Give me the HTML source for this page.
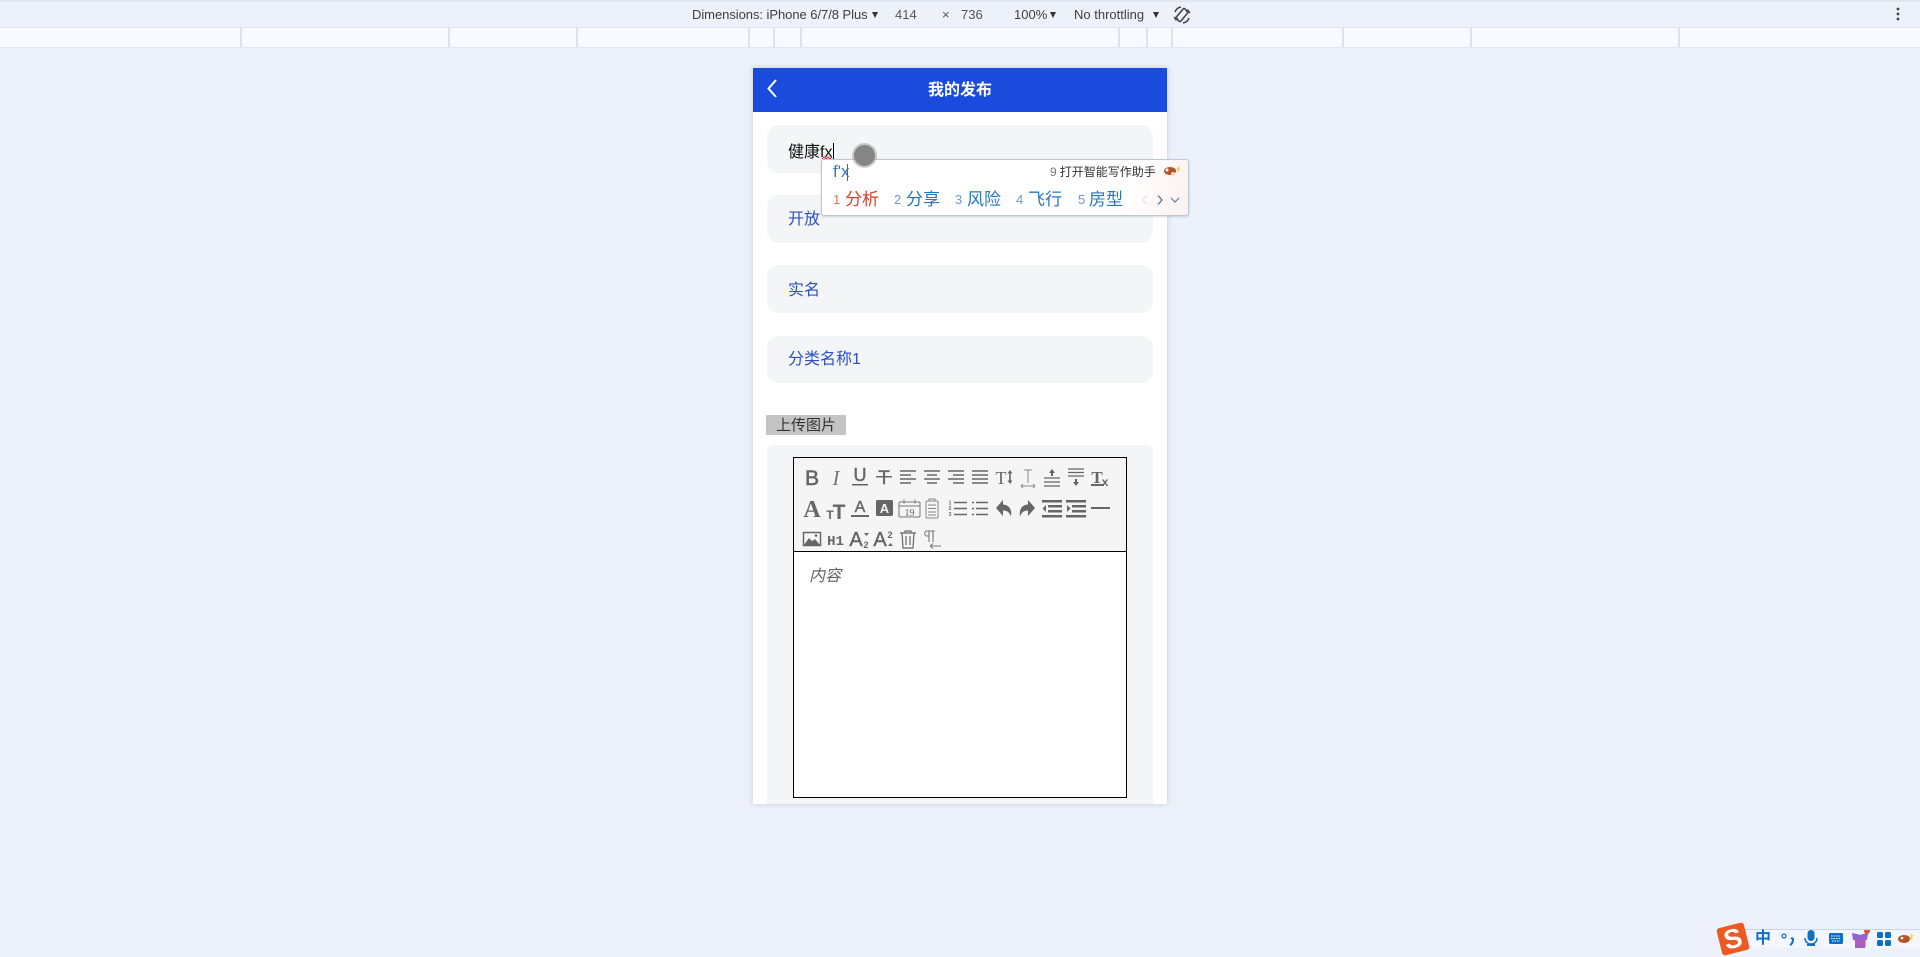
<!DOCTYPE html>
<html lang="zh">
<head>
<meta charset="utf-8">
<title>我的发布</title>
<style>
html,body{margin:0;padding:0;width:1920px;height:948px;overflow:hidden;background:#edf1fa;font-family:"Liberation Sans","Noto Sans CJK SC",sans-serif}
.a{position:absolute;white-space:nowrap}
.t{font-size:13px;color:#3a3f47;line-height:16px;top:7px}
.tri{width:0;height:0;border-left:3.500px solid transparent;border-right:3.500px solid transparent;border-top:6px solid #333;top:12px}
.rule{top:28px;width:2px;height:19px;background:#dbe2f3}
.box{left:767px;width:386px;background:#f4f5f6;border-radius:12px}
.v{left:788px;font-size:16px;line-height:24px;color:#2b50c4}
.n{font-size:13px;color:#6f97c8;line-height:20px;top:190px}
.w{font-size:17px;color:#2a76b8;line-height:22px;top:189px}
</style>
</head>
<body>
<div class="a" style="left:0;top:0;width:1920px;height:2px;background:#e3e7f2"></div>
<div class="a" style="left:0;top:27px;width:1920px;height:21px;background:#f7faff;border-top:1px solid #e2e6f0;border-bottom:1px solid #e2e6f0;box-sizing:border-box"></div>
<div class="a rule" style="left:240px"></div><div class="a rule" style="left:448px"></div><div class="a rule" style="left:576px"></div><div class="a rule" style="left:748px"></div><div class="a rule" style="left:773px"></div><div class="a rule" style="left:800px"></div><div class="a rule" style="left:1118px"></div><div class="a rule" style="left:1146px"></div><div class="a rule" style="left:1171px"></div><div class="a rule" style="left:1342px"></div><div class="a rule" style="left:1470px"></div><div class="a rule" style="left:1678px"></div>

<div class="a t" style="left:692px;letter-spacing:-.05px">Dimensions: iPhone 6/7/8 Plus</div><div class="a tri" style="left:872px"></div>
<div class="a t" style="left:895px;color:#555">414</div><div class="a t" style="left:942px;color:#555">×</div><div class="a t" style="left:961px;color:#555">736</div>
<div class="a t" style="left:1014px">100%</div><div class="a tri" style="left:1050px"></div>
<div class="a t" style="left:1074px">No throttling</div><div class="a tri" style="left:1153px"></div>
<svg class="a" style="left:1172px;top:5px" width="20" height="20" viewBox="0 0 20 20" fill="none" stroke="#444" stroke-width="1.600"><rect x="7" y="3.500" width="6" height="13" rx="1" transform="rotate(40 10 10)"/><path d="M3 7C4 4 6 2.500 9 2M17 13c-1 3-3 4.500-6 5"/><path d="M2 12l2 3 2-2M18 8l-2-3-2 2" stroke-width="1.200"/></svg>
<svg class="a" style="left:1895px;top:7px" width="6" height="14"><circle cx="3" cy="2" r="1.400" fill="#444"/><circle cx="3" cy="7" r="1.400" fill="#444"/><circle cx="3" cy="12" r="1.400" fill="#444"/></svg>

<!-- phone -->
<div class="a" style="left:753px;top:68px;width:414px;height:736px;background:#fff;box-shadow:0 0 5px rgba(120,130,160,.35)"></div>
<div class="a" style="left:753px;top:68px;width:414px;height:44px;background:#1a4bdc"></div>
<svg class="a" style="left:765px;top:78px" width="16" height="22" fill="none" stroke="#fff" stroke-width="2"><path d="M11 2L3.500 10.500 11 19"/></svg>
<div class="a" style="left:753px;top:79px;width:414px;text-align:center;color:#fff;font-weight:700;font-size:16px;line-height:24px">我的发布</div>

<div class="a box" style="top:125px;height:48px"></div>
<div class="a box" style="top:195px;height:48px"></div>
<div class="a box" style="top:265px;height:48px"></div>
<div class="a box" style="top:336px;height:47px"></div>
<div class="a" style="left:788px;top:141px;font-size:16px;line-height:24px;color:#111">健康fx</div>
<div class="a" style="left:833px;top:143px;width:1px;height:17px;background:#000"></div>
<div class="a v" style="top:208px">开放</div>
<div class="a v" style="top:279px">实名</div>
<div class="a v" style="top:348px">分类名称1</div>

<div class="a" style="left:766px;top:415px;width:80px;height:20px;background:#c4c4c4;color:#333;font-size:15px;line-height:22px;text-align:center">上传图片</div>

<div class="a box" style="top:445px;height:359px;border-radius:6px 6px 0 0"></div>
<div class="a" style="left:793px;top:457px;width:334px;height:341px;border:1px solid #000;box-sizing:border-box;background:#fff"></div>
<div class="a" style="left:794px;top:458px;width:332px;height:93px;background:#f5f5f6;border-bottom:1px solid #000"></div>
<div class="a" style="left:809px;top:565px;font-size:16px;line-height:24px;color:#666;font-style:italic">内容</div>

<svg class="a" style="left:0;top:0;pointer-events:none" width="1920" height="948" viewBox="0 0 1920 948">
<g fill="#666" stroke="#666" font-family="'Liberation Sans',sans-serif" text-anchor="middle" stroke-width="0">
 <!-- row 1 -->
 <text x="812" y="485" font-size="21" stroke-width=".6">B</text>
 <text x="836" y="485" font-size="21" font-style="italic" font-family="'Liberation Serif',serif" fill="#777">I</text>
 <text x="860" y="481" font-size="18" stroke-width=".4">U</text><rect x="852" y="484" width="16" height="1.500"/>
 <text x="884" y="484" font-size="19" stroke-width=".4">T</text><rect x="876" y="476" width="16" height="1.500"/>
 <g fill="none" stroke-width="1.500">
  <path d="M900 471h16M900 475h11M900 479h16M900 483h11"/>
  <path d="M924 471h16M927 475h10M924 479h16M927 483h10"/>
  <path d="M948 471h16M953 475h11M948 479h16M953 483h11"/>
  <path d="M972 471h16M972 475h16M972 479h16M972 483h16"/>
 </g>
 <text x="1001" y="484" font-size="18" font-family="'Liberation Serif',serif">T</text>
 <path d="M1010 470l2.500 3.500h-1.700v7h1.700l-2.500 3.500-2.500-3.500h1.700v-7h-1.700z" stroke-width="0"/>
 <g fill="none" stroke="#8a8a8a" stroke-width="1">
  <path d="M1024 470h8M1028 470v13M1022 486h12M1021 486l2-2M1021 486l2 2M1035 486l-2-2M1035 486l-2 2"/>
 </g>
 <g fill="none" stroke-width="1.200"><path d="M1044 478h16M1044 482h16M1044 486h16"/></g><path d="M1052 469l3 4h-2v3h-2v-3h-2z"/>
 <g fill="none" stroke-width="1.300"><path d="M1068 469h16M1068 472.500h16M1068 476h16"/></g><path d="M1076 486l3-4h-2v-3h-2v3h-2z"/>
 <text x="1097" y="483" font-size="17" font-weight="700" font-family="'Liberation Serif',serif">T</text><rect x="1091" y="484" width="13" height="2"/>
 <text x="1105" y="486" font-size="12" font-weight="700">x</text>

 <!-- row 2 -->
 <text x="812" y="517" font-size="24" font-weight="700" font-family="'Liberation Serif',serif">A</text>
 <text x="830" y="519" font-size="12" font-weight="700">T</text><text x="839" y="519" font-size="21" font-weight="700">T</text>
 <text x="860" y="512" font-size="16" stroke-width=".4">A</text><rect x="851" y="515" width="18" height="2"/>
 <rect x="876" y="500" width="17" height="16" rx="1.500"/><text x="884.500" y="513" font-size="13" font-weight="700" fill="#f5f5f6">A</text>
 <g fill="none" stroke="#777" stroke-width="1"><rect x="899" y="502" width="21" height="15" rx="1"/><path d="M899 506h21M904 499.500v4M915 499.500v4"/></g>
 <text x="909.500" y="516" font-size="10" font-family="'Liberation Serif',serif">19</text>
 <g fill="none" stroke="#888" stroke-width="1"><rect x="926" y="501" width="12" height="17" rx="1"/><path d="M929 501v-2h6v2M928 505h8M928 508.500h8M928 512h8M928 515h8"/></g>
 <text x="950" y="504.500" font-size="5" font-weight="700">1</text><text x="950" y="510" font-size="5" font-weight="700">2</text><text x="950" y="516" font-size="5" font-weight="700">3</text>
 <g fill="none" stroke-width="1.500"><path d="M954 502.500h13M954 508.500h13M954 514.500h13"/><path d="M972 502.500h2M972 508.500h2M972 514.500h2M976 502.500h12M976 508.500h12M976 514.500h12"/></g>
 <path d="M996 508l7-8v4.500c7 .5 9 6 8 12-1.500-4-3.500-6-8-6v5.500z"/>
 <path d="M1036 508l-7-8v4.500c-7 .5-9 6-8 12 1.500-4 3.500-6 8-6v5.500z" transform="translate(-1 0)"/>
 <g><rect x="1042" y="500" width="20" height="2.500"/><rect x="1048" y="505" width="14" height="2.500"/><rect x="1048" y="510" width="14" height="2.500"/><rect x="1042" y="515" width="20" height="2.500"/><path d="M1046 505v7l-3.500-3.500z"/></g>
 <g><rect x="1066" y="500" width="20" height="2.500"/><rect x="1072" y="505" width="14" height="2.500"/><rect x="1072" y="510" width="14" height="2.500"/><rect x="1066" y="515" width="20" height="2.500"/><path d="M1067 505v7l3.500-3.500z"/></g>
 <rect x="1091" y="507" width="19" height="2"/>

 <!-- row 3 -->
 <g><rect x="803.500" y="532.500" width="17" height="13" fill="#f5f5f6" stroke="#666" stroke-width="1.500"/><path d="M804 545l5-7 3 3 3-2 5 6z"/><circle cx="816" cy="535.500" r="1.300"/></g>
 <text x="835.500" y="545" font-size="14" font-family="'Liberation Mono',monospace" font-weight="700">H1</text>
 <text x="856" y="546" font-size="20" stroke-width=".4">A</text><text x="866" y="548" font-size="9" font-weight="700">2</text><path d="M864 533h5l-2.500 3z"/>
 <text x="880" y="546" font-size="20" stroke-width=".4">A</text><text x="890" y="538" font-size="9" font-weight="700">2</text><path d="M888 546h5l-2.500-3z"/>
 <g fill="none" stroke="#666" stroke-width="1.200"><path d="M900 533h16M905 533v-2h6v2M902 533l1 15h10l1-15M906 536v9M910 536v9"/></g>
 <g fill="none" stroke="#777" stroke-width="1.100"><path d="M930 531h8M932 531v11M936 531v11M930 531c-3 0-3 5 0 5h2M944 546h-11M933 546l3-2.500M933 546l3 2.500" transform="translate(-3 0)"/></g>
</g>
</svg>

<!-- IME -->
<svg class="a" style="left:822px;top:156px" width="12" height="4"><path d="M0 3l2-2 2 2 2-2 2 2 2-2" fill="none" stroke="#e03030" stroke-width="1"/></svg>
<div class="a" style="left:821px;top:159px;width:368px;height:57px;box-sizing:border-box;border:1px solid #bcc6dd;border-radius:3px;background:linear-gradient(100deg,#fff 82%,#fdf1f2 100%);box-shadow:0 1px 2px rgba(90,100,130,.25)"></div>
<div class="a" style="left:833px;top:161px;font-size:17px;line-height:22px;color:#3a78b8">f'x</div>
<div class="a" style="left:847px;top:164px;width:1px;height:17px;background:#c0392b"></div>
<div class="a" style="left:1050px;top:164px;font-size:12px;line-height:17px;color:#333"><span style="color:#777;margin-right:3px">9</span>打开智能写作助手</div>
<svg class="a" style="left:1161px;top:162px" width="22" height="20"><ellipse cx="9" cy="9" rx="6" ry="4" fill="#b8532a"/><circle cx="6" cy="8" r="1.500" fill="#fff"/><circle cx="12" cy="12" r="2" fill="#f0d8c8"/><path d="M17 4l2 2-1 4-2-2z" fill="#f3d34a"/></svg>
<div class="a n" style="left:833px;color:#e8735a">1</div><div class="a w" style="left:845px;color:#d9402a">分析</div>
<div class="a n" style="left:894px">2</div><div class="a w" style="left:906px">分享</div>
<div class="a n" style="left:955px">3</div><div class="a w" style="left:967px">风险</div>
<div class="a n" style="left:1016px">4</div><div class="a w" style="left:1028px">飞行</div>
<div class="a n" style="left:1078px">5</div><div class="a w" style="left:1089px">房型</div>
<svg class="a" style="left:1140px;top:193px" width="44" height="14" fill="none" stroke-width="1.200"><path d="M7 2.500L3 7l4 4.500" stroke="#dfe3ea"/><path d="M18 2.500l4 4.500-4 4.500" stroke="#4a6a90"/><path d="M31 5l4 4 4-4" stroke="#5a7a9e"/></svg>

<!-- cursor, above the IME -->
<div class="a" style="left:854px;top:145px;width:21px;height:21px;border-radius:50%;background:#858585;box-shadow:0 0 0 2px rgba(130,130,130,.4)"></div>

<!-- Sogou bar -->
<div class="a" style="left:1745px;top:929px;width:175px;height:19px;box-sizing:border-box;background:#f3f6fe;border:1px solid #c9d4ef;border-right:0;border-bottom:0"></div>
<div class="a" style="left:1719px;top:925px;width:28px;height:28px;background:#ec5a24;border-radius:3px;transform:rotate(-14deg);color:#fff;font-size:27px;font-weight:700;line-height:28px;text-align:center">S</div>
<div class="a" style="left:1755px;top:929px;font-size:16px;font-weight:700;line-height:20px;color:#0e6fc4">中</div>
<svg class="a" style="left:1780px;top:930px" width="140" height="18" viewBox="0 0 140 18">
 <circle cx="4" cy="6" r="2" fill="none" stroke="#0e6fc4" stroke-width="1.300"/><path d="M11 8l2 1c0 3-1 5-3 6" fill="none" stroke="#0e6fc4" stroke-width="2"/>
 <rect x="27.500" y="0" width="7" height="11" rx="3.500" fill="#0e6fc4"/><path d="M25 8c0 4 3 6 6 6s6-2 6-6" fill="none" stroke="#0e6fc4" stroke-width="1.500"/><rect x="27" y="14" width="8" height="2" fill="#0e6fc4"/>
 <rect x="49" y="3" width="14" height="11" rx="1.500" fill="#0e6fc4"/><path d="M51 6h10M51 8.500h10M52 11h8" stroke="#f3f6fe" stroke-width="1" stroke-dasharray="1.500 1"/>
 <path d="M72 3l5 1 3 1 3-1 5-1-1 7-2 0v8h-10v-8h-2z" fill="#8a65d8"/><path d="M74 8h12v9h-10z" fill="#c85ab0" opacity=".6"/><circle cx="87" cy="1" r="3" fill="#e8503a"/>
 <rect x="97" y="2" width="6" height="6" rx="1.500" fill="#0e6fc4"/><rect x="105" y="2" width="6" height="6" rx="1.500" fill="#0e6fc4"/><rect x="97" y="10" width="6" height="6" rx="1.500" fill="#0e6fc4"/><rect x="105" y="10" width="6" height="6" rx="1.500" fill="#0e6fc4"/>
 <ellipse cx="124" cy="9" rx="6" ry="4" fill="#b8532a"/><circle cx="122" cy="8" r="1.300" fill="#fff"/><path d="M131 4l2 1-1 5-2-1z" fill="#f3d34a"/>
</svg>
</body>
</html>
